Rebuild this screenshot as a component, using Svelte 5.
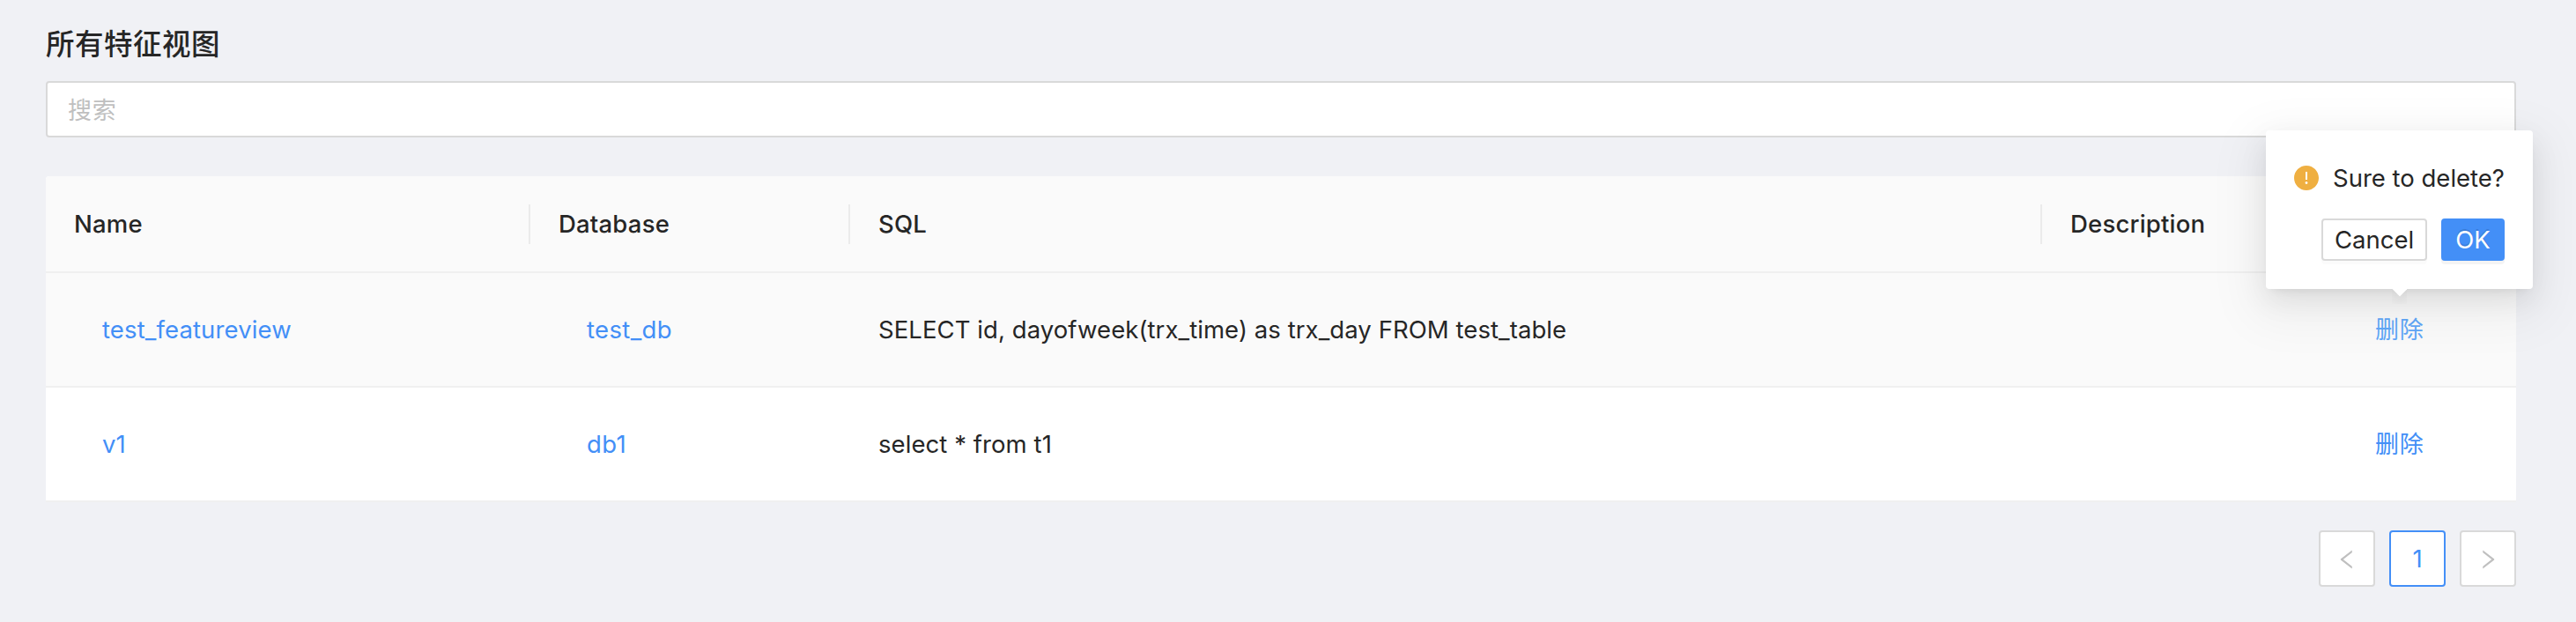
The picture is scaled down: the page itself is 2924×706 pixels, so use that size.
<script>
  const columns = ['Name', 'Database', 'SQL', 'Description', ''];
  const rows = [
    { name: 'test_featureview', db: 'test_db', sql: 'SELECT id, dayofweek(trx_time) as trx_day FROM test_table', hover: true },
    { name: 'v1', db: 'db1', sql: 'select * from t1', hover: false }
  ];
</script>

<main>
  <h1>所有特征视图</h1>
  <input class="search" placeholder="搜索" />

  <div class="table">
    <div class="row head">
      {#each columns as c}
        <div class="cell">{c}</div>
      {/each}
    </div>
    {#each rows as r}
      <div class="row" class:hover={r.hover}>
        <div class="cell link name">{r.name}</div>
        <div class="cell link db">{r.db}</div>
        <div class="cell sql">{r.sql}</div>
        <div class="cell"></div>
        <div class="cell link">
          <span class="del" class:active={r.hover}>删除</span>
          {#if r.hover}
            <div class="pop">
              <div class="msg">
                <svg viewBox="0 0 1024 1024"><path d="M512 64C264.6 64 64 264.6 64 512s200.6 448 448 448 448-200.6 448-448S759.4 64 512 64zm-32 232c0-4.4 3.6-8 8-8h48c4.4 0 8 3.6 8 8v272c0 4.4-3.6 8-8 8h-48c-4.4 0-8-3.6-8-8V296zm32 440a48.01 48.01 0 010-96 48.01 48.01 0 010 96z" /></svg>
                <span>Sure to delete?</span>
              </div>
              <div class="btns">
                <button class="cancel">Cancel</button>
                <button class="ok">OK</button>
              </div>
              <div class="arrow"><i></i></div>
            </div>
          {/if}
        </div>
      </div>
    {/each}
  </div>

  <nav>
    <div class="page">
      <svg viewBox="0 0 1024 1024"><path d="M724 218.3V141c0-6.7-7.7-10.4-12.9-6.3L260.3 486.8a31.86 31.86 0 000 50.3l450.8 352.1c5.3 4.1 12.9.4 12.9-6.3v-77.3c0-4.9-2.3-9.6-6.1-12.6l-360-281 360-281.1c3.8-3 6.1-7.7 6.1-12.6z" /></svg>
    </div>
    <div class="page current">1</div>
    <div class="page">
      <svg viewBox="0 0 1024 1024"><path d="M765.7 486.8L314.9 134.7A7.97 7.97 0 00302 141v77.3c0 4.9 2.3 9.6 6.1 12.6l360 281.1-360 281.1c-3.9 3-6.1 7.7-6.1 12.6V883c0 6.7 7.7 10.4 12.9 6.3l450.8-352.1a31.96 31.96 0 000-50.4z" /></svg>
    </div>
  </nav>
</main>

<style>
  :global(body) {
    background: #f0f1f5;
  }
  main {
    box-sizing: border-box;
    height: 706px;
    padding: 26px 68px 0 52px;
    overflow: hidden;
    font-family: Inter, 'Noto Sans CJK SC', sans-serif;
    font-size: 27.5px;
    line-height: 44px;
    color: #262626;
  }
  h1 {
    margin: 0 0 22px;
    font-family: 'Noto Sans CJK SC', sans-serif;
    font-size: 32.5px;
    font-weight: 500;
    line-height: 44px;
    letter-spacing: 0.5px;
  }
  .search {
    display: block;
    box-sizing: border-box;
    width: 100%;
    height: 64px;
    margin: 0 0 44px;
    padding: 0 22px 2px 23px;
    border: 2px solid #d9d9d9;
    border-radius: 4px;
    background: #fff;
    font: 27px 'Noto Sans CJK SC', sans-serif;
    letter-spacing: 0.8px;
  }
  .search::placeholder {
    color: #bfbfbf;
    opacity: 1;
  }
  .table {
    border-radius: 4px 4px 0 0;
    background: #fff;
  }
  .row {
    display: grid;
    grid-template-columns: 550px 363px 1353px 314px 224px;
    box-sizing: border-box;
    height: 130px;
    border-bottom: 2px solid #f0f0f0;
  }
  .row.head {
    height: 110px;
    border-radius: 4px 4px 0 0;
    background: #fafafa;
    font-weight: 500;
    letter-spacing: 0.2px;
  }
  .row.hover {
    background: #fafafa;
  }
  .cell {
    position: relative;
    display: flex;
    align-items: center;
    padding-left: 32px;
    white-space: nowrap;
  }
  .head .cell:not(:last-child) {
    background: linear-gradient(#ebebeb, #ebebeb) right center / 2px 45px no-repeat;
  }
  .cell.link {
    padding-left: 64px;
    color: #438ff7;
  }
  .cell.name {
    letter-spacing: 0.13px;
  }
  .cell.db {
    letter-spacing: 0.35px;
  }
  .cell.sql {
    letter-spacing: 0.07px;
  }
  .del {
    margin-top: -2px;
    font-family: 'Noto Sans CJK SC', sans-serif;
    font-size: 27px;
    letter-spacing: 0.8px;
  }
  .del.active {
    color: #60a7f8;
  }
  .pop {
    position: absolute;
    z-index: 2;
    left: -60px;
    top: -162px;
    box-sizing: border-box;
    width: 303px;
    height: 180px;
    padding: 32px;
    border-radius: 4px;
    background: #fff;
    color: #262626;
    box-shadow:
      0 6px 12px -8px rgba(0, 0, 0, 0.12),
      0 12px 32px rgba(0, 0, 0, 0.08),
      0 18px 56px 16px rgba(0, 0, 0, 0.05);
  }
  .msg {
    display: flex;
    align-items: center;
    gap: 14px;
    margin-bottom: 24px;
  }
  .msg svg {
    flex: none;
    width: 32px;
    height: 32px;
    margin-left: -2px;
    fill: #efaf41;
  }
  .btns {
    display: flex;
    justify-content: flex-end;
    gap: 16px;
  }
  button {
    display: flex;
    align-items: center;
    justify-content: center;
    box-sizing: border-box;
    height: 48px;
    padding: 0;
    border: 2px solid #d9d9d9;
    border-radius: 4px;
    background: #fff;
    color: #262626;
    font: inherit;
  }
  .cancel {
    width: 120px;
    box-shadow: 0 4px 0 rgba(0, 0, 0, 0.015);
  }
  .ok {
    width: 72px;
    border-color: #438ff7;
    background: #438ff7;
    color: #fff;
    text-shadow: 0 -2px 0 rgba(0, 0, 0, 0.12);
    box-shadow: 0 4px 0 rgba(0, 0, 0, 0.045);
  }
  .arrow {
    position: absolute;
    left: 143px;
    top: 180px;
    width: 17px;
    height: 17px;
    overflow: hidden;
  }
  .arrow i {
    display: block;
    width: 12px;
    height: 12px;
    margin: -6px auto 0;
    background: #fff;
    box-shadow: 6px 6px 14px rgba(0, 0, 0, 0.07);
    transform: rotate(45deg);
  }
  nav {
    display: flex;
    justify-content: flex-end;
    gap: 16px;
    margin-top: 32px;
  }
  .page {
    display: flex;
    align-items: center;
    justify-content: center;
    box-sizing: border-box;
    width: 64px;
    height: 64px;
    border: 2px solid #d9d9d9;
    border-radius: 4px;
    background: #fff;
  }
  .page svg {
    width: 28px;
    height: 28px;
    margin-top: 2px;
    fill: #bfbfbf;
  }
  .current {
    border-color: #438ff7;
    color: #438ff7;
  }
</style>
